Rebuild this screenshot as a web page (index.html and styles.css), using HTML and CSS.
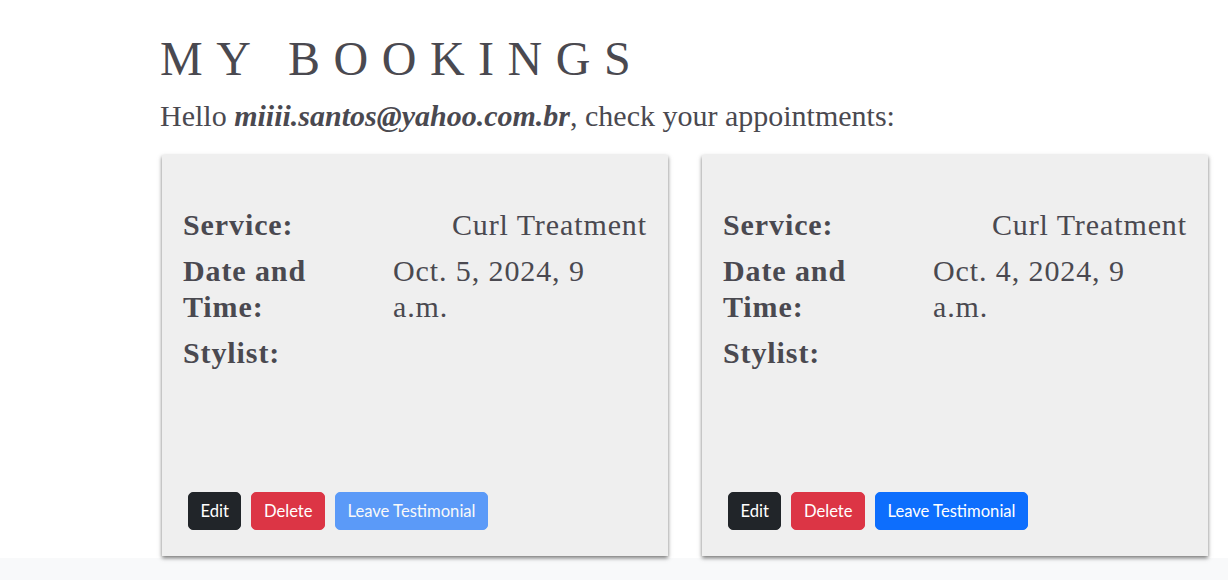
FILE: index.html
```html
<!DOCTYPE html>
<html lang="en">
<head>
<meta charset="utf-8">
<title>My Bookings</title>
<link rel="stylesheet" href="styles.css">
</head>
<body>
<main class="page">
  <h1 class="title">MY BOOKINGS</h1>
  <p class="greeting">Hello <strong><em>miiii.santos@yahoo.com.br</em></strong>, check your appointments:</p>
  <div class="cards">
    <section class="card">
      <dl class="details">
        <dt>Service:</dt><dd class="end">Curl Treatment</dd>
        <dt>Date and Time:</dt><dd>Oct. 5, 2024, 9 a.m.</dd>
        <dt>Stylist:</dt><dd></dd>
      </dl>
      <div class="actions">
        <button class="btn btn-dark">Edit</button>
        <button class="btn btn-danger">Delete</button>
        <button class="btn btn-primary" disabled>Leave Testimonial</button>
      </div>
    </section>
    <section class="card">
      <dl class="details">
        <dt>Service:</dt><dd class="end">Curl Treatment</dd>
        <dt>Date and Time:</dt><dd>Oct. 4, 2024, 9 a.m.</dd>
        <dt>Stylist:</dt><dd></dd>
      </dl>
      <div class="actions">
        <button class="btn btn-dark">Edit</button>
        <button class="btn btn-danger">Delete</button>
        <button class="btn btn-primary">Leave Testimonial</button>
      </div>
    </section>
  </div>
</main>
<footer class="footer"></footer>
</body>
</html>
```
FILE: styles.css
```css
html, body {
  margin: 0;
  padding: 0;
  background: #ffffff;
}
body {
  font-family: "Liberation Serif", "Times New Roman", serif;
  color: #4a4950;
}
.page {
  padding: 30px 0 0 160px;
}
.title {
  margin: 0 0 10px 0;
  font-size: 48px;
  line-height: 1.2;
  font-weight: 400;
  letter-spacing: 13.5px;
}
.greeting {
  margin: 0 0 21px 0;
  font-size: 30px;
  line-height: 36px;
}
.cards {
  display: grid;
  grid-template-columns: 506px 506px;
  column-gap: 34px;
  padding-left: 2px;
  margin-bottom: 2px;
}
.card {
  position: relative;
  box-sizing: border-box;
  height: 401px;
  background: #efefef;
  box-shadow: 0 2px 4px rgba(0, 0, 0, 0.55);
  padding: 52px 21px 21px 21px;
  display: flex;
  flex-direction: column;
}
.details {
  margin: 0;
  display: grid;
  grid-template-columns: 210px 1fr;
  row-gap: 10px;
  font-size: 30px;
  line-height: 36px;
  letter-spacing: 0.9px;
}
.details dt {
  font-weight: 700;
}
.details dd {
  margin: 0;
}
.details dd.end {
  text-align: right;
}
.actions {
  margin-top: auto;
  display: flex;
}
.btn {
  margin: 5px;
  font-family: Lato, "Liberation Sans", sans-serif;
  font-size: 16.6px;
  line-height: 24px;
  padding: 6px 11.5px;
  border: 1px solid transparent;
  border-radius: 5px;
  color: #ffffff;
  cursor: pointer;
}
.btn-dark {
  background: #212529;
  border-color: #212529;
}
.btn-danger {
  background: #dc3545;
  border-color: #dc3545;
}
.btn-primary {
  background: #0d6efd;
  border-color: #0d6efd;
}
.btn:disabled {
  opacity: 0.65;
  cursor: default;
}
.footer {
  height: 22px;
  background: #f8f9fa;
}
```
